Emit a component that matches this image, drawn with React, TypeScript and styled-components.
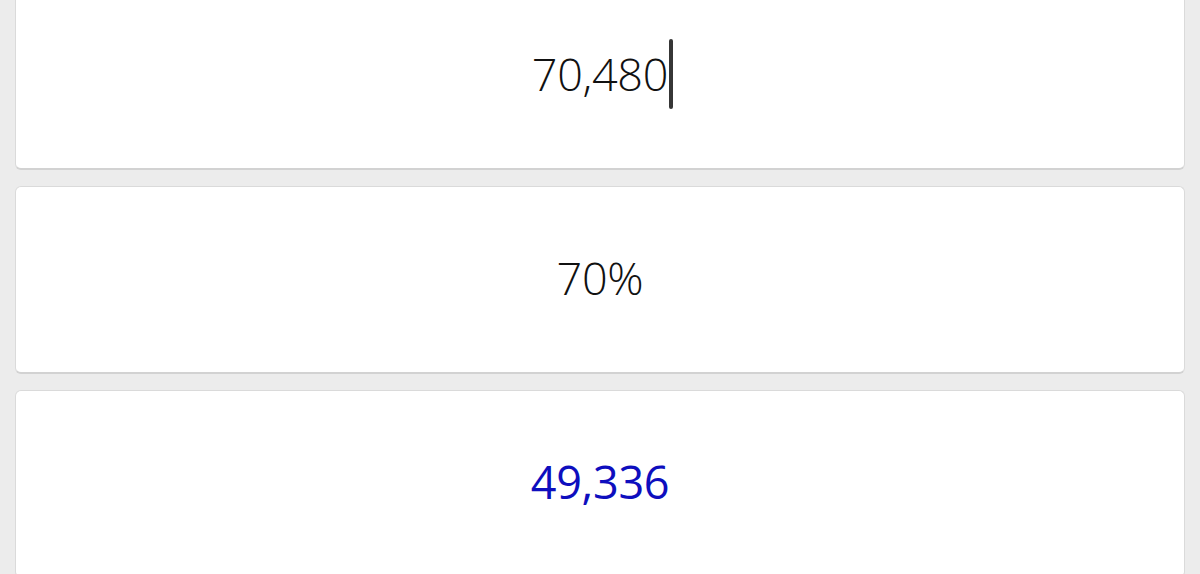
import styled, { createGlobalStyle } from "styled-components";

const GlobalStyle = createGlobalStyle`
  html, body {
    margin: 0;
    padding: 0;
    background: #ececec;
    overflow: hidden;
  }
`;

const Page = styled.div`
  display: flex;
  flex-direction: column;
  gap: 16px;
  padding: 0 15px;
  margin-top: -18px;
  height: 600px;
  font-family: "Open Sans", "Noto Sans", sans-serif;
`;

const Card = styled.div`
  box-sizing: border-box;
  height: 188px;
  flex-shrink: 0;
  padding-bottom: 4px;
  background: #ffffff;
  border: 1px solid #dadada;
  border-bottom: 2px solid #d2d2d2;
  border-radius: 6px;
  display: flex;
  align-items: center;
  justify-content: center;
`;

const Value = styled.span<{ $accent?: boolean }>`
  position: relative;
  font-size: 45px;
  line-height: 1;
  letter-spacing: -0.3px;
  font-weight: ${(p) => (p.$accent ? 450 : 360)};
  color: ${(p) => (p.$accent ? "#0e0ebe" : "#111111")};
`;

const Caret = styled.span`
  position: absolute;
  right: -5px;
  top: -12px;
  width: 4px;
  height: 70px;
  border-radius: 2px;
  background: #363636;
`;

export default function App() {
  return (
    <>
      <GlobalStyle />
      <Page>
        <Card>
          <Value>
            70,480
            <Caret />
          </Value>
        </Card>
        <Card>
          <Value>70%</Value>
        </Card>
        <Card>
          <Value $accent>49,336</Value>
        </Card>
      </Page>
    </>
  );
}
